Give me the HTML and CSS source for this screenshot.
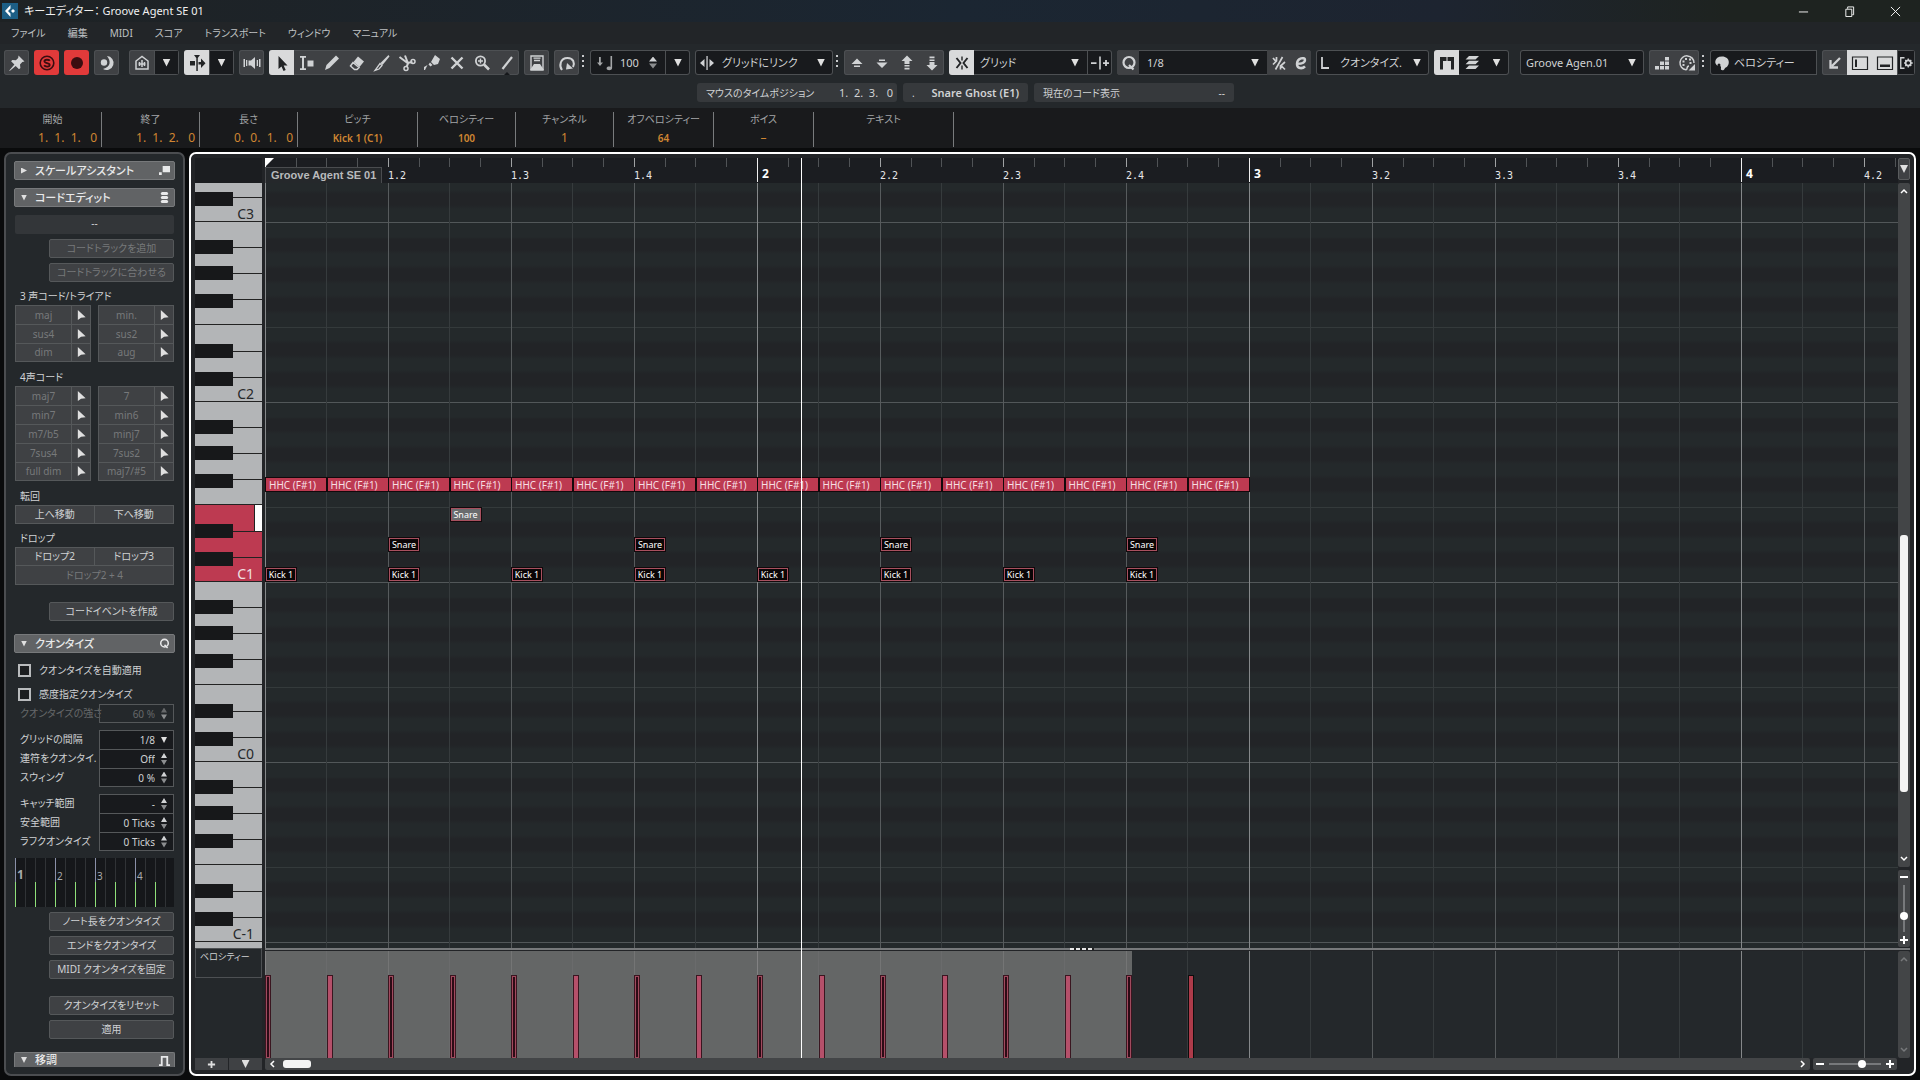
FILE: index.html
```html
<!DOCTYPE html>
<html lang="ja">
<head>
<meta charset="utf-8">
<title>キーエディター： Groove Agent SE 01</title>
<link rel="stylesheet" href="styles.css">
</head>
<body>
<svg class="sprite" aria-hidden="true">
  <symbol id="pin" viewBox="0 0 24 24"><path d="M13.500 4.500l6 6-2.200.6-2.300 2.300.4 3.600-1.400 1.200-3.300-3.300-6 5.100-.4-.4 5.100-6-3.300-3.300 1.200-1.400 3.600.4 2.300-2.300z"/></symbol>
  <symbol id="solo" viewBox="0 0 24 24"><circle cx="12" cy="12" r="6.800" fill="none" stroke="currentColor" stroke-width="1.600"/><path d="M14.800 9.800c-1-1.500-5.400-1.500-5.400.5 0 2.300 5.300 1.200 5.300 3.600 0 2.100-4.500 2.100-5.600.4" fill="none" stroke="currentColor" stroke-width="1.800"/></symbol>
  <symbol id="rec" viewBox="0 0 24 24"><circle cx="12" cy="12" r="6"/></symbol>
  <symbol id="moon" viewBox="0 0 24 24"><path d="M12 5a7 7 0 1 1-4 13c8-2 8-8 4-13z"/><circle cx="9" cy="11.500" r="3.200"/></symbol>
  <symbol id="home" viewBox="0 0 24 24"><path d="M6 18V10l6-4.500 6 4.500v8zM12 9v7M8.500 13h7M9.500 11v4M14.500 11v4" fill="none" stroke="currentColor" stroke-width="1.500"/></symbol>
  <symbol id="scroll" viewBox="0 0 24 24"><path d="M9 4h6l-3 4zM11.300 6h1.500v14h-1.500zM5 10h5v4.500H5zM13.500 11h2.500V7.500l4.500 4.700L16 17v-3.500h-2.500z"/></symbol>
  <symbol id="speaker" viewBox="0 0 24 24"><path d="M8.500 9.500h2.500L15 6v12l-4-3.500H8.500zM3.500 8H5v8H3.500zM6 9h1.300v6H6zM16.700 9H18v6h-1.300zM19 8h1.500v8H19z"/></symbol>
  <symbol id="arrow" viewBox="0 0 24 24"><path d="M8.500 5v13l3-2.500 2 4.500 2.200-1-2-4.500h3.800z"/></symbol>
  <symbol id="range" viewBox="0 0 24 24"><path d="M5 5h6v1.800H9v10.400h2V19H5v-1.800h2V6.800H5zM12.500 9.500h6v6h-6z"/></symbol>
  <symbol id="pencil" viewBox="0 0 24 24"><path d="M16 4.500l3 3L9.500 17 5 19l1.500-5z"/></symbol>
  <symbol id="eraser" viewBox="0 0 24 24"><path d="M13 5.500l6 5-4.500 5.500-6-5z"/><path d="M8 11.500l6 5-2 2H9.500l-4-3.500z" fill="none" stroke="currentColor" stroke-width="1.500"/></symbol>
  <symbol id="knife" viewBox="0 0 24 24"><path d="M18.500 4l1 1.500-7 8.500-2-2z"/><path d="M10 12.500l2 2-3 3.500-4 1.500z" fill="none" stroke="currentColor" stroke-width="1.300"/></symbol>
  <symbol id="scissors" viewBox="0 0 24 24"><path d="M4.500 6l8 6 5-1M10 4.500l3 8-1.500 3.500" fill="none" stroke="currentColor" stroke-width="2"/><circle cx="18" cy="10.500" r="2" fill="none" stroke="currentColor" stroke-width="1.500"/><circle cx="11" cy="17.500" r="2" fill="none" stroke="currentColor" stroke-width="1.500"/></symbol>
  <symbol id="glue" viewBox="0 0 24 24"><path d="M15 4l5 4-2 5-4 1-3-3zM10 11.500l2.500 2.500-2 1.500-2-2zM7.500 14L5 19H4v-3z"/></symbol>
  <symbol id="mute" viewBox="0 0 24 24"><path d="M6.500 6.500l11 11M17.500 6.500l-11 11" stroke="currentColor" stroke-width="2.400"/></symbol>
  <symbol id="mag" viewBox="0 0 24 24"><circle cx="10.500" cy="10" r="4.600" fill="none" stroke="currentColor" stroke-width="1.800"/><path d="M14 13.500l5 5" stroke="currentColor" stroke-width="2.600"/><path d="M10.500 7.500v5M8 10h5" stroke="currentColor" stroke-width="1.400"/></symbol>
  <symbol id="line" viewBox="0 0 24 24"><path d="M17 6L7.500 18" stroke="currentColor" stroke-width="2.200"/><path d="M9 24l3-3 3 3z" fill="#15171a"/></symbol>
  <symbol id="edit" viewBox="0 0 24 24"><path d="M6 5h12v14H6z" fill="none" stroke="currentColor" stroke-width="1.400"/><path d="M8.500 7.200h7M9 9.500h6" stroke="currentColor" stroke-width="1.300"/><path d="M5 19l4-6h6l4 6z"/></symbol>
  <symbol id="loop" viewBox="0 0 24 24"><path d="M7 19c-3-4-2-12 5.500-12 6 0 7.500 5 5.500 9" fill="none" stroke="currentColor" stroke-width="2"/><path d="M12 12l-1 6.500 7-1z"/></symbol>
  <symbol id="note" viewBox="0 0 24 24"><path d="M6 6h1.800v5.500H10l-3 3.500-3-3.500h2zM17.500 5h1.600v12c0 2.800-5.500 2.800-5.500.5 0-2 2.600-2.300 3.900-1.500z"/></symbol>
  <symbol id="link" viewBox="0 0 24 24"><path d="M11.400 5h1.300v14h-1.300zM9.500 8v8L5 12zM14.500 8v8l4.500-4z"/></symbol>
  <symbol id="up" viewBox="0 0 24 24"><path d="M12 7.500l5.500 5.500h-11zM9 14.500h6v1.500H9z"/></symbol>
  <symbol id="down" viewBox="0 0 24 24"><path d="M12 17l5.500-5.500h-11zM9 8.500h6V10H9z"/></symbol>
  <symbol id="up2" viewBox="0 0 24 24"><path d="M12 4.500l5.500 5.500h-3v3h-5v-3h-3zM9.500 14h5v1.600h-5zM9.500 16.800h5v1.600h-5z"/></symbol>
  <symbol id="down2" viewBox="0 0 24 24"><path d="M12 19.500l5.500-5.500h-3v-3h-5v3h-3zM9.500 8.400h5V10h-5zM9.500 5.600h5v1.600h-5z"/></symbol>
  <symbol id="snap" viewBox="0 0 24 24"><path d="M6.500 7l4 5-4 5M17.500 7l-4 5 4 5" fill="none" stroke="currentColor" stroke-width="1.900"/><path d="M11.300 5.500h1.400v4h-1.400zM11.300 14.500h1.400v4h-1.400z"/></symbol>
  <symbol id="gridtype" viewBox="0 0 24 24"><path d="M3 11.200h5.500v1.800H3zM11.200 5.500h1.600v13h-1.600zM15 11.200h6v1.800h-6zM17.100 9h1.800v6h-1.800z"/></symbol>
  <symbol id="q" viewBox="0 0 24 24"><circle cx="12" cy="11.500" r="5.500" fill="none" stroke="currentColor" stroke-width="2.200"/><path d="M12 14l4.500 4.500" stroke="currentColor" stroke-width="2.200"/></symbol>
  <symbol id="iq" viewBox="0 0 24 24"><path d="M6 7l3 3.500M6 13.500l3.500-3.500V6M15.500 6L8.500 18.500M18 11l-4 3.500 4 4M13.500 14v4.500" fill="none" stroke="currentColor" stroke-width="1.700"/></symbol>
  <symbol id="e" viewBox="0 0 24 24"><path d="M8 12.800c3.500 0 8-.8 8-3.800C16 5.500 8 7 8 13c0 5 5.500 5 8 2.300" fill="none" stroke="currentColor" stroke-width="2.500"/></symbol>
  <symbol id="ell" viewBox="0 0 24 24"><path d="M6 6v11h7" fill="none" stroke="currentColor" stroke-width="1.800"/></symbol>
  <symbol id="parts" viewBox="0 0 24 24"><path d="M5 6h6.500v4H8v8.500H5zM12.500 6H19v12.500h-3V10h-3.500z"/></symbol>
  <symbol id="layers" viewBox="0 0 24 24"><path d="M9 5h10l-3.500 3.500h-10zM9 9.800h10l-3.500 3.500h-10zM9 14.600h10l-3.500 3.500h-10z"/></symbol>
  <symbol id="steps" viewBox="0 0 24 24"><path d="M5 15h4v3.500H5zM10 15h4v3.500h-4zM15 15h4v3.500h-4zM10 10.500h4V14h-4zM15 10.500h4V14h-4zM15 6h4v3.500h-4z"/></symbol>
  <symbol id="palette" viewBox="0 0 24 24"><path d="M19 12a7 7 0 1 0-8 6.800c2 0 0-3.800 3-3.800" fill="none" stroke="currentColor" stroke-width="1.500"/><path d="M7.500 9.500h2v2h-2zM10 7h2v2h-2zM14 7.500h2v2h-2zM7.500 13h2v2h-2zM14.500 11h2v2h-2zM20 13v6.500h-6.500z"/></symbol>
  <symbol id="colour" viewBox="0 0 24 24"><path d="M12 5.500c8.500 0 8.500 9.500 3 11.500-1 3.500-5 2.500-4 0 .5-2-1-2-2.500-2-5-1-4.500-9.500 3.500-9.500z"/><circle cx="9" cy="14" r="1.500" fill="#181a1d"/></symbol>
  <symbol id="sw" viewBox="0 0 24 24"><path d="M17 7l-8 8M7.500 9v7.500H15" fill="none" stroke="currentColor" stroke-width="2.300"/></symbol>
  <symbol id="zoneL" viewBox="0 0 24 24"><path d="M4.500 6h15v12.500h-15z" fill="none" stroke="currentColor" stroke-width="1.200"/><path d="M7 8.500h2v7.500H7z"/></symbol>
  <symbol id="zoneB" viewBox="0 0 24 24"><path d="M4.500 6h15v12.500h-15z" fill="none" stroke="currentColor" stroke-width="1.200"/><path d="M7 13.500h10V16H7z"/></symbol>
  <symbol id="setup" viewBox="0 0 24 24"><path d="M10 5H5v14h5" fill="none" stroke="currentColor" stroke-width="1.800"/><circle cx="15" cy="12" r="3.500" fill="none" stroke="currentColor" stroke-width="2.200"/><path d="M15 6v3M15 15v3M9.500 12h2M18.500 12h2.500M11 8l2 2M19 8l-2 2M11 16l2-2M19 16l-2-2" stroke="currentColor" stroke-width="1.800"/></symbol>
  <symbol id="ptr" viewBox="0 0 12 12"><path d="M2 0v11l3.500-2.500L10.500 8z"/></symbol>
</svg>

<header class="titlebar">
  <svg class="logo" viewBox="0 0 16 16"><path fill="#1d5f86" d="M0 0h16v16H0z"/><path d="M8.500 2L3 8l5.500 6V10.500L6 8l2.500-2.500z" fill="#fff"/><path d="M11 6l2 2-2 2-2-2z" fill="#fff"/></svg>
  <h1>キーエディター： Groove Agent SE 01</h1>
  <div class="winbtns">
    <button aria-label="最小化"><svg viewBox="0 0 12 12"><path d="M1 6.500h10"/></svg></button>
    <button aria-label="元に戻す"><svg viewBox="0 0 12 12"><path d="M2 3.500h6.500v8H2zM4 3V1h6.500v8.500H9"/></svg></button>
    <button aria-label="閉じる"><svg viewBox="0 0 12 12"><path d="M1 1l10 10M11 1L1 11"/></svg></button>
  </div>
</header>

<nav class="menubar">
  <a href="#">ファイル</a><a href="#">編集</a><a href="#">MIDI</a><a href="#">スコア</a><a href="#">トランスポート</a><a href="#">ウィンドウ</a><a href="#">マニュアル</a>
</nav>

<div class="toolbar">
  <div class="group"><button class="tb" aria-label="固定"><svg><use href="#pin"/></svg></button></div>
  <div class="group red"><button class="tb" aria-label="ソロ"><svg><use href="#solo"/></svg></button></div>
  <div class="group red"><button class="tb" aria-label="録音"><svg><use href="#rec"/></svg></button></div>
  <div class="group moon"><button class="tb" aria-label="レトロスペクティブ録音"><svg><use href="#moon"/></svg></button></div>
  <div class="group"><button class="tb" aria-label="可視性"><svg><use href="#home"/></svg></button><button class="tb dark" aria-label="可視性メニュー"><i class="tri"></i></button></div>
  <div class="group"><button class="tb lit" aria-label="オートスクロール"><svg><use href="#scroll"/></svg></button><button class="tb dark" aria-label="スクロールメニュー"><i class="tri"></i></button></div>
  <div class="group"><button class="tb" aria-label="試聴"><svg><use href="#speaker"/></svg></button></div>
  <div class="group">
    <button class="tb lit" aria-label="選択"><svg><use href="#arrow"/></svg></button><button class="tb" aria-label="範囲"><svg><use href="#range"/></svg></button><button class="tb" aria-label="鉛筆"><svg><use href="#pencil"/></svg></button><button class="tb" aria-label="消しゴム"><svg><use href="#eraser"/></svg></button><button class="tb" aria-label="トリム"><svg><use href="#knife"/></svg></button><button class="tb" aria-label="はさみ"><svg><use href="#scissors"/></svg></button><button class="tb" aria-label="のり"><svg><use href="#glue"/></svg></button><button class="tb" aria-label="ミュート"><svg><use href="#mute"/></svg></button><button class="tb" aria-label="ズーム"><svg><use href="#mag"/></svg></button><button class="tb" aria-label="ライン"><svg><use href="#line"/></svg></button>
  </div>
  <div class="group"><button class="tb" aria-label="コントローラー自動選択"><svg><use href="#edit"/></svg></button></div>
  <div class="group"><button class="tb" aria-label="ループ"><svg><use href="#loop"/></svg></button></div>
  <i class="dots"></i>
  <div class="group dark w-vel"><svg class="ico dim"><use href="#note"/></svg><input class="num" value="100" aria-label="挿入ベロシティー"><i class="spin"></i><button class="tb split" aria-label="ベロシティーメニュー"><i class="tri"></i></button></div>
  <label class="group dark w-link"><svg class="ico"><use href="#link"/></svg><select aria-label="クオンタイズリンク"><option>グリッドにリンク</option></select><i class="tri"></i></label>
  <i class="dots"></i>
  <div class="group"><button class="tb" aria-label="上へ移動"><svg><use href="#up"/></svg></button><button class="tb" aria-label="下へ移動"><svg><use href="#down"/></svg></button><button class="tb" aria-label="1 オクターブ上"><svg><use href="#up2"/></svg></button><button class="tb" aria-label="1 オクターブ下"><svg><use href="#down2"/></svg></button></div>
  <div class="group dark w-snap"><button class="tb lit" aria-label="スナップ"><svg><use href="#snap"/></svg></button><select aria-label="スナップタイプ"><option>グリッド</option></select><i class="tri"></i><button class="tb split" aria-label="グリッドタイプ"><svg><use href="#gridtype"/></svg></button></div>
  <div class="group dark w-quant"><button class="tb grey" aria-label="クオンタイズ"><svg><use href="#q"/></svg></button><select aria-label="クオンタイズ値"><option>1/8</option></select><i class="tri"></i><button class="tb grey" aria-label="iQ"><svg><use href="#iq"/></svg></button><button class="tb grey" aria-label="クオンタイズパネル"><svg><use href="#e"/></svg></button></div>
  <label class="group dark w-len"><svg class="ico"><use href="#ell"/></svg><select aria-label="長さクオンタイズ"><option>クオンタイズ.</option></select><i class="tri"></i></label>
  <div class="group dark"><button class="tb lit" aria-label="パート境界"><svg><use href="#parts"/></svg></button><button class="tb" aria-label="パート編集"><svg><use href="#layers"/></svg></button><button class="tb" aria-label="パートメニュー"><i class="tri"></i></button></div>
  <label class="group dark w-part"><select aria-label="編集パート"><option>Groove Agen.01</option></select><i class="tri"></i></label>
  <div class="group"><button class="tb" aria-label="ステップ入力"><svg><use href="#steps"/></svg></button><button class="tb" aria-label="MIDI 入力"><svg><use href="#palette"/></svg></button></div>
  <i class="dots"></i>
  <label class="group dark open w-colour"><svg class="ico"><use href="#colour"/></svg><select aria-label="イベントカラー"><option>ベロシティー</option></select></label>
  <div class="group"><button class="tb" aria-label="下ゾーンで開く"><svg><use href="#sw"/></svg></button><button class="tb lit" aria-label="左ゾーン"><svg><use href="#zoneL"/></svg></button><button class="tb lit" aria-label="下ゾーン"><svg><use href="#zoneB"/></svg></button><button class="tb dark narrow" aria-label="設定"><svg><use href="#setup"/></svg></button></div>
</div>

<div class="status">
  <div class="pill wide"><span>マウスのタイムポジション</span><span class="pos">1.  2.  3.   0</span></div>
  <div class="pill mid"><span>.</span><b>Snare Ghost (E1)</b></div>
  <div class="pill wide"><span>現在のコード表示</span><span>--</span></div>
</div>

<dl class="infoline">
  <div class="time"><dt>開始</dt><dd>1.  1.  1.   0</dd></div>
  <div class="time"><dt>終了</dt><dd>1.  1.  2.   0</dd></div>
  <div class="time"><dt>長さ</dt><dd>0.  0.  1.   0</dd></div>
  <div class="pitch"><dt>ピッチ</dt><dd class="small">Kick 1 (C1)</dd></div>
  <div><dt>ベロシティー</dt><dd class="small">100</dd></div>
  <div><dt>チャンネル</dt><dd>1</dd></div>
  <div class="off-vel"><dt>オフベロシティー</dt><dd class="small">64</dd></div>
  <div class="voice"><dt>ボイス</dt><dd>–</dd></div>
  <div class="text"><dt>テキスト</dt><dd></dd></div>
</dl>

<main class="work">
  <aside class="inspector">
    <button class="head"><i class="tri side"></i><span>スケールアシスタント</span><svg viewBox="0 0 12 12"><path d="M4 1h8v7H4zM0 8h3v3H0z"/></svg></button>
    <button class="head"><i class="tri"></i><span>コードエディット</span><svg viewBox="0 0 12 12"><rect x="2" y="0" width="8" height="3.400" rx="1.700"/><rect x="2" y="4.300" width="8" height="3.400" rx="1.700"/><rect x="2" y="8.600" width="8" height="3.400" rx="1.700"/></svg></button>
    <div class="readout">--</div>
    <button class="btn off">コードトラックを追加</button>
    <button class="btn off">コードトラックに合わせる</button>
    <h3>3 声コード/トライアド</h3>
    <div class="chords">
      <div><button>maj</button><button aria-label="maj"><svg><use href="#ptr"/></svg></button></div><div><button>min.</button><button aria-label="min."><svg><use href="#ptr"/></svg></button></div>
      <div><button>sus4</button><button aria-label="sus4"><svg><use href="#ptr"/></svg></button></div><div><button>sus2</button><button aria-label="sus2"><svg><use href="#ptr"/></svg></button></div>
      <div><button>dim</button><button aria-label="dim"><svg><use href="#ptr"/></svg></button></div><div><button>aug</button><button aria-label="aug"><svg><use href="#ptr"/></svg></button></div>
    </div>
    <h3>4声コード</h3>
    <div class="chords">
      <div><button>maj7</button><button aria-label="maj7"><svg><use href="#ptr"/></svg></button></div><div><button>7</button><button aria-label="7"><svg><use href="#ptr"/></svg></button></div>
      <div><button>min7</button><button aria-label="min7"><svg><use href="#ptr"/></svg></button></div><div><button>min6</button><button aria-label="min6"><svg><use href="#ptr"/></svg></button></div>
      <div><button>m7/b5</button><button aria-label="m7/b5"><svg><use href="#ptr"/></svg></button></div><div><button>minj7</button><button aria-label="minj7"><svg><use href="#ptr"/></svg></button></div>
      <div><button>7sus4</button><button aria-label="7sus4"><svg><use href="#ptr"/></svg></button></div><div><button>7sus2</button><button aria-label="7sus2"><svg><use href="#ptr"/></svg></button></div>
      <div><button>full dim</button><button aria-label="full dim"><svg><use href="#ptr"/></svg></button></div><div><button>maj7/#5</button><button aria-label="maj7/#5"><svg><use href="#ptr"/></svg></button></div>
    </div>
    <h3>転回</h3>
    <div class="pair"><button>上へ移動</button><button>下へ移動</button></div>
    <h3>ドロップ</h3>
    <div class="pair"><button>ドロップ2</button><button>ドロップ3</button><button class="full off">ドロップ2 + 4</button></div>
    <button class="btn apart">コードイベントを作成</button>
    <button class="head gap"><i class="tri"></i><span>クオンタイズ</span><svg viewBox="4 4 16 16"><use href="#q" width="24" height="24"/></svg></button>
    <label class="check"><input type="checkbox">クオンタイズを自動適用</label>
    <label class="check"><input type="checkbox">感度指定クオンタイズ</label>
    <div class="fields off"><label for="f1">クオンタイズの強さ</label><div><input id="f1" value="60 %" disabled><i class="spin"></i></div></div>
    <div class="fields">
      <label for="f2">グリッドの間隔</label><div><select id="f2"><option>1/8</option></select><i class="tri"></i></div>
      <label for="f3">連符をクオンタイ.</label><div><input id="f3" value="Off"><i class="spin"></i></div>
      <label for="f4">スウィング</label><div><input id="f4" value="0 %"><i class="spin"></i></div>
    </div>
    <div class="fields">
      <label for="f5">キャッチ範囲</label><div><input id="f5" value="-"><i class="spin"></i></div>
      <label for="f6">安全範囲</label><div><input id="f6" value="0 Ticks"><i class="spin"></i></div>
      <label for="f7">ラフクオンタイズ</label><div><input id="f7" value="0 Ticks"><i class="spin"></i></div>
    </div>
    <div class="qgrid"><b>1</b><span>2</span><span>3</span><span>4</span></div>
    <button class="btn">ノート長をクオンタイズ</button>
    <button class="btn">エンドをクオンタイズ</button>
    <button class="btn">MIDI クオンタイズを固定</button>
    <button class="btn apart">クオンタイズをリセット</button>
    <button class="btn">適用</button>
    <button class="head gap last"><i class="tri"></i><span>移調</span><svg viewBox="0 0 12 12"><path d="M0 11h3V2h6v9h3" fill="none" stroke="currentColor" stroke-width="2"/></svg></button>
  </aside>

  <section class="editor">
    <div class="keys">
      <div class="corner"></div>
      <div class="piano">
        <div class="octave first"><span>C3</span></div>
        <div class="octave"><span>C2</span></div>
        <div class="octave held"><span>C1</span></div>
        <div class="octave"><span>C0</span></div>
        <div class="octave"><span>C-1</span></div>
        <div class="octave last"></div>
      </div>
      <div class="lanehead"><button>ベロシティー</button></div>
      <div class="laneadd"><button aria-label="レーンを追加"><svg viewBox="0 0 10 10"><path d="M1 5h8M5 1v8"/></svg></button><button aria-label="レーンメニュー"><i class="tri"></i></button></div>
    </div>

    <div class="canvas">
      <div class="ruler">
        <div class="part">Groove Agent SE 01</div>
        <svg class="locator" viewBox="0 0 9 9"><path d="M0 0h9L0 9z"/></svg>
        <span style="--at:1">1.2</span><span style="--at:2">1.3</span><span style="--at:3">1.4</span><b style="--at:4">2</b>
        <span style="--at:5">2.2</span><span style="--at:6">2.3</span><span style="--at:7">2.4</span><b style="--at:8">3</b>
        <span style="--at:9">3.2</span><span style="--at:10">3.3</span><span style="--at:11">3.4</span><b style="--at:12">4</b><span style="--at:13">4.2</span>
      </div>
      <div class="notes">
        <div class="note hat" style="--at:0;--row:17">HHC (F#1)</div><div class="note hat" style="--at:.5;--row:17">HHC (F#1)</div><div class="note hat" style="--at:1;--row:17">HHC (F#1)</div><div class="note hat" style="--at:1.5;--row:17">HHC (F#1)</div>
        <div class="note hat" style="--at:2;--row:17">HHC (F#1)</div><div class="note hat" style="--at:2.5;--row:17">HHC (F#1)</div><div class="note hat" style="--at:3;--row:17">HHC (F#1)</div><div class="note hat" style="--at:3.5;--row:17">HHC (F#1)</div>
        <div class="note hat" style="--at:4;--row:17">HHC (F#1)</div><div class="note hat" style="--at:4.5;--row:17">HHC (F#1)</div><div class="note hat" style="--at:5;--row:17">HHC (F#1)</div><div class="note hat" style="--at:5.5;--row:17">HHC (F#1)</div>
        <div class="note hat" style="--at:6;--row:17">HHC (F#1)</div><div class="note hat" style="--at:6.5;--row:17">HHC (F#1)</div><div class="note hat" style="--at:7;--row:17">HHC (F#1)</div><div class="note hat" style="--at:7.5;--row:17">HHC (F#1)</div>
        <div class="note ghost" style="--at:1.5;--row:19">Snare</div>
        <div class="note" style="--at:1;--row:21">Snare</div><div class="note" style="--at:3;--row:21">Snare</div><div class="note" style="--at:5;--row:21">Snare</div><div class="note" style="--at:7;--row:21">Snare</div>
        <div class="note" style="--at:0;--row:23">Kick 1</div><div class="note" style="--at:1;--row:23">Kick 1</div><div class="note" style="--at:2;--row:23">Kick 1</div><div class="note" style="--at:3;--row:23">Kick 1</div>
        <div class="note" style="--at:4;--row:23">Kick 1</div><div class="note" style="--at:5;--row:23">Kick 1</div><div class="note" style="--at:6;--row:23">Kick 1</div><div class="note" style="--at:7;--row:23">Kick 1</div>
      </div>
      <div class="splitter"><i></i></div>
      <div class="velocity">
        <div class="selection"></div>
        <i class="bar sel" style="--at:0"></i><i class="bar" style="--at:.5"></i><i class="bar sel" style="--at:1"></i><i class="bar sel" style="--at:1.5"></i>
        <i class="bar sel" style="--at:2"></i><i class="bar" style="--at:2.5"></i><i class="bar sel" style="--at:3"></i><i class="bar" style="--at:3.5"></i>
        <i class="bar sel" style="--at:4"></i><i class="bar" style="--at:4.5"></i><i class="bar sel" style="--at:5"></i><i class="bar" style="--at:5.5"></i>
        <i class="bar sel" style="--at:6"></i><i class="bar" style="--at:6.5"></i><i class="bar sel" style="--at:7"></i><i class="bar plain" style="--at:7.5"></i>
      </div>
      <div class="hbar">
        <div class="hscroll"><svg viewBox="0 0 8 8"><path d="M5 1L2 4l3 3"/></svg><i class="thumb"></i><svg class="end" viewBox="0 0 8 8"><path d="M3 1l3 3-3 3"/></svg></div>
        <div class="hzoom"><svg viewBox="0 0 8 8"><path d="M0 4h8"/></svg><i class="track"><i class="knob"></i></i><svg viewBox="0 0 8 8"><path d="M0 4h8M4 0v8"/></svg></div>
      </div>
      <i class="playhead"></i>
    </div>

    <div class="vbar">
      <button class="vmenu" aria-label="ルーラー表示形式"><i class="tri"></i></button>
      <div class="vscroll"><svg viewBox="0 0 8 8"><path d="M1 6l3-3 3 3"/></svg><i class="thumb"></i><svg class="end" viewBox="0 0 8 8"><path d="M1 2l3 3 3-3"/></svg></div>
      <div class="vzoom"><svg viewBox="0 0 8 8"><path d="M0 4h8"/></svg><i class="track"><i class="knob"></i></i><svg viewBox="0 0 8 8"><path d="M0 4h8M4 0v8"/></svg></div>
      <div class="vsplit"></div>
      <div class="vlane"><svg viewBox="0 0 8 8"><path d="M1 6l3-3 3 3"/></svg><svg viewBox="0 0 8 8"><path d="M1 2l3 3 3-3"/></svg></div>
    </div>
  </section>
</main>
</body>
</html>
```
FILE: styles.css
```css
:root {
  --edge: #4d5053;
  --field: #181a1d;
  --btn: #3f4144;
  --panel: #24282b;
  --ink: #d0d2d4;
  --red: #bd3a51;
  --beat: 123px;
  --row-h: 15px;
}

* { box-sizing: border-box; }

body {
  margin: 0;
  height: 100vh;
  display: flex;
  flex-direction: column;
  overflow: hidden;
  background: #0a0b0c;
  color: var(--ink);
  font: 12px/16px "Noto Sans", "Noto Sans CJK JP", sans-serif;
  font-feature-settings: "palt";
}

button, input, select {
  margin: 0;
  padding: 0;
  border: 0;
  border-radius: 0;
  background: none;
  color: inherit;
  font: inherit;
  font-feature-settings: inherit;
  appearance: none;
  outline: none;
  min-width: 0;
}

svg { fill: currentColor; display: block; flex: none; }
.sprite { position: absolute; width: 0; height: 0; }
a { color: inherit; text-decoration: none; }

.tri {
  flex: none;
  width: 8px;
  height: 8px;
  background: #e0e0e0;
  clip-path: polygon(0 0, 100% 0, 50% 100%);
}
.tri.side { clip-path: polygon(0 0, 100% 50%, 0 100%); }

.spin {
  flex: none;
  width: 6px;
  height: 12px;
  background: linear-gradient(currentColor 50%, #8b8d8f 50%);
  clip-path: polygon(50% 0, 100% 5px, 0 5px, 0 7px, 100% 7px, 50% 100%, 0 7px, 0 5px);
}

/* title and menu */
.titlebar {
  flex: none;
  height: 22px;
  display: flex;
  align-items: center;
  gap: 6px;
  padding-left: 2px;
  background: linear-gradient(90deg, #1e2224, #1b2632 50%, #1d2430 75%, #1e2320 90%);
}
.logo { width: 16px; height: 16px; }
.titlebar h1 { margin: 0; font-size: 11px; font-weight: 400; color: #f0f0f0; flex: 1; }
.winbtns { display: flex; }
.winbtns button { width: 46px; height: 22px; display: grid; place-items: center; color: #fff; }
.winbtns:last-child { padding-right: 2px; }
.winbtns svg { width: 11px; height: 11px; fill: none; stroke: currentColor; }
.menubar {
  flex: none;
  height: 22px;
  display: flex;
  align-items: center;
  gap: 22px;
  padding-left: 11px;
  background: #222528;
  color: #bfc1c3;
  font-size: 10px;
}

/* toolbar */
.toolbar {
  flex: none;
  display: flex;
  gap: 5px;
  padding: 6px 5px 8px 4px;
  background: var(--panel);
}
.group {
  flex: none;
  height: 25px;
  display: flex;
  align-items: center;
  overflow: hidden;
  border-radius: 3px;
  background: var(--btn);
  box-shadow: inset 0 0 0 1px var(--edge);
}
.group.dark { background: var(--field); }
.group.red { background: #e23a3a; box-shadow: none; color: #3a0d10; }
.group.moon { margin-right: 5px; }
.tb { width: 25px; height: 25px; display: grid; place-items: center; flex: none; }
.tb svg, .ico { width: 24px; height: 24px; }
.tb.dark { background: var(--field); box-shadow: inset 0 0 0 1px var(--edge); }
.tb.lit { background: #d9dadb; color: #222426; }
.tb.grey { background: var(--btn); width: 22px; }
.tb.split { border-left: 1px solid var(--edge); }
.tb.narrow { width: 18px; }
.tb.narrow svg { width: 18px; height: 18px; }
.ico.dim { color: #a4a6a8; margin: 0 3px; }
.dots {
  width: 2px;
  margin: 5px 1px 5px -2px;
  flex: none;
  background: repeating-linear-gradient(#c8cacc 0 2px, transparent 2px 5px);
}
.group select { flex: 1; height: 25px; padding: 0 3px; font-size: 11px; }
.group > .tri { margin-right: 8px; }
.num { width: 28px; font-size: 11px; }
.w-vel { width: 100px; }
.w-vel .spin { margin: 0 8px 0 auto; width: 8px; }
.w-link { width: 138px; }
.w-snap { width: 163px; }
.w-snap select { padding-left: 6px; }
.w-quant { width: 194px; }
.w-quant select { padding-left: 8px; }
.w-len { width: 113px; }
.w-len select { padding: 0; }
.w-part { width: 124px; margin-left: 6px; }
.w-part select { padding-left: 6px; }
.w-colour { flex: 1 1 60px; }
.w-colour select { padding: 0; }
.group.open { border-radius: 3px 0 0 3px; }

/* status */
.status {
  flex: none;
  display: flex;
  justify-content: center;
  gap: 6px;
  padding: 0 0 6px 11px;
  background: var(--panel);
  font-size: 10px;
}
.pill { height: 19px; display: flex; align-items: center; justify-content: space-between; padding: 0 9px; border-radius: 3px; background: #36393c; }
.pill.wide { width: 200px; }
.pill.mid { width: 125px; }
.pill b { font-size: 11px; font-weight: 600; }
.pos { white-space: pre; font-size: 11px; margin-right: -5px; }

/* info line */
.infoline { flex: none; height: 40px; margin: 0 0 4px; padding: 4px 0 1px 4px; display: flex; background: #191a1c; }
.infoline > div { width: 98px; border-right: 1px solid #797b7d; text-align: center; }
.infoline > .pitch { width: 120px; }
.infoline > .off-vel, .infoline > .voice { width: 100px; }
.infoline > .text { width: 140px; }
.infoline dt { font-size: 10px; line-height: 15px; color: #a3a5a7; }
.infoline dd { margin: 3px 0 0; font-size: 12px; line-height: 16px; color: #d08632; white-space: pre; }
.infoline dd.small { font-size: 10px; font-weight: 600; }
.infoline .time dd { text-align: right; padding-right: 4px; }

/* workspace */
.work { flex: 1; min-height: 0; display: flex; gap: 4px; padding: 0 4px 4px; }

.inspector {
  flex: none;
  width: 181px;
  display: flex;
  flex-direction: column;
  padding: 7px 8px;
  border: 2px solid #4b4d50;
  border-radius: 7px;
  background: var(--panel);
  overflow: hidden;
  font-size: 10px;
}
.inspector > * { flex: none; }
.head {
  height: 19px;
  display: flex;
  align-items: center;
  gap: 8px;
  margin-bottom: 8px;
  padding: 0 4px 0 6px;
  border: 1px solid #77797b;
  border-radius: 2px;
  background: #616365;
  color: #e8e9ea;
  font-size: 11px;
  font-weight: 500;
  text-align: left;
}
.head .tri { width: 6px; height: 6px; }
.head span { flex: 1; }
.head svg { width: 11px; height: 11px; }
.head.gap { margin-top: 8px; margin-bottom: 5px; }
.inspector > .head.last { flex: 0 1 19px; min-height: 0; margin-bottom: 0; border-bottom: 0; border-radius: 2px 2px 0 0; line-height: 14px; }
.readout { height: 19px; margin: 0 1px 5px; text-align: center; border-radius: 2px; background: #333639; }
.btn, .chords button, .pair button { background: var(--btn); border: 1px solid #55585a; line-height: 15px; }
.btn { height: 19px; margin: 0 1px 5px 35px; border-radius: 2px; }
.btn.apart { margin-top: 12px; }
.off, .chords button:first-child { color: #77797b; }
.inspector h3 { margin: 0; padding: 1px 6px 1px; height: 18px; font-size: 10px; font-weight: 400; }
.chords { display: grid; grid-template-columns: 1fr 1fr; column-gap: 7px; margin: 0 1px 6px; }
.chords > div { display: grid; grid-template-columns: 1fr 19px; height: 19px; }
.chords > div button + button { border-left: 0; display: grid; place-items: center; color: #e0e0e0; }
.chords > div button { border-bottom: 0; }
.chords > div:nth-last-child(-n+2) button { border-bottom: 1px solid #55585a; }
.chords svg { width: 11px; height: 11px; }
.pair { display: grid; grid-template-columns: 1fr 1fr; margin: 0 1px 5px; }
.pair button { height: 19px; }
.pair button:nth-child(2) { border-left: 0; }
.pair .full { grid-column: 1 / -1; border-top: 0; }
.check { height: 24px; display: flex; align-items: center; gap: 8px; padding-left: 4px; }
.check + .fields { margin-top: -2px; }
.check input { width: 13px; height: 13px; border: 2px solid #b9bbbd; background: #1c1e20; }
.fields {
  display: grid;
  grid-template-columns: minmax(0, 1fr) 75px;
  margin: 0 1px 7px 6px;
  align-items: center;
  white-space: nowrap;
}
.fields > label { line-height: 19px; }
.fields > div { height: 19px; display: flex; align-items: center; padding-right: 6px; gap: 6px; background: var(--field); border: 1px solid #55585a; border-bottom: 0; }
.fields > div:last-child { border-bottom: 1px solid #55585a; }
.fields input, .fields select { width: 100%; text-align: right; text-align-last: right; flex: 1; }
.fields .tri { width: 6px; height: 6px; }
.fields.off { color: #66686a; }
.fields.off > div { background: none; }
.qgrid {
  height: 49px;
  margin: 0 1px 5px;
  display: grid;
  grid-template-columns: repeat(4, 40px);
  padding-top: 8px;
  overflow: hidden;
  color: #a8abad;
  font-size: 10px;
  line-height: 20px;
  background:
    repeating-linear-gradient(90deg, #8fe07a 0 1px, transparent 1px 20px) 0 24px / 100% 25px no-repeat,
    repeating-linear-gradient(90deg, #8a90a8 0 1px, transparent 1px 40px) 0 0 / 100% 24px no-repeat,
    repeating-linear-gradient(90deg, #303336 0 1px, transparent 1px 10px),
    #15171a;
}
.qgrid > * { padding-left: 2px; }
.qgrid b { font-size: 12px; line-height: 17px; }

/* editor */
.editor {
  flex: 1;
  min-width: 0;
  display: grid;
  grid-template-columns: 67px minmax(0, 1fr) 12px;
  padding: 4px;
  border: 2px solid #fff;
  border-radius: 7px;
  background: #222427;
}
.keys, .vbar { display: flex; flex-direction: column; min-height: 0; }
.corner { flex: none; height: 25px; background: #1b1d20; }
.piano { flex: 1; min-height: 0; overflow: hidden; display: flex; flex-direction: column; }
.octave {
  --key: #b3b5b7;
  --low: #b3b5b7;
  flex: none;
  height: 180px;
  display: flex;
  align-items: flex-end;
  justify-content: flex-end;
  padding: 0 8px 0 0;
  color: #26282a;
  font-size: 14px;
  line-height: 16px;
  background:
    linear-gradient(transparent 18px, #17181a 18px 32px, transparent 32px 44px, #17181a 44px 58px, transparent 58px 72px, #17181a 72px 86px, transparent 86px 122px, #17181a 122px 136px, transparent 136px 150px, #17181a 150px 164px, transparent 164px) 0 100% / 38px 180px no-repeat,
    linear-gradient(var(--key) 25px, #222 25px 26px, var(--key) 26px 51px, #222 51px 52px, var(--key) 52px 77px, #222 77px 78px, var(--key) 78px 102px, #222 102px 103px, var(--low) 103px 129px, #222 129px 130px, var(--low) 130px 155px, #222 155px 156px, var(--low) 156px 179px, #222 179px) 0 100% / 100% 180px no-repeat;
}
.octave.first { height: 39px; }
.octave.last { height: 8px; background: var(--key); }
.octave.held { --low: #bd3a51; color: #f0e0e2; position: relative; }
.octave.held::after { content: ""; position: absolute; right: 0; top: 103px; width: 7px; height: 26px; background: #fff; border-left: 1px solid #222; }
.lanehead { flex: none; height: 110px; background: var(--panel); }
.lanehead button { width: 100%; height: 30px; padding: 2px 4px; border: 1px solid #4d5053; font-size: 9px; line-height: 12px; text-align: left; display: flex; }
.laneadd { flex: none; height: 12px; display: grid; grid-template-columns: 1fr 1fr; gap: 1px; }
.laneadd button { background: var(--btn); display: grid; place-items: center; }
.laneadd svg { width: 9px; height: 9px; stroke: #e0e0e0; stroke-width: 2; }

.canvas { position: relative; margin-left: 3px; display: flex; flex-direction: column; min-height: 0; overflow: hidden; }
.ruler {
  flex: none;
  height: 25px;
  position: relative;
  background:
    repeating-linear-gradient(90deg, #f0f0f0 0 1px, transparent 1px 492px) 0 0 / 100% 24px no-repeat,
    repeating-linear-gradient(90deg, #a0a2a4 0 1px, transparent 1px 123px) 0 0 / 100% 9px no-repeat,
    repeating-linear-gradient(90deg, #505356 0 1px, transparent 1px 31px, #505356 31px 32px, transparent 32px 61px, #505356 61px 62px, transparent 62px 92px, #505356 92px 93px, transparent 93px 123px) 0 0 / 100% 9px no-repeat,
    #1b1d21;
}
.ruler > span, .ruler > b { position: absolute; left: calc(var(--at) * var(--beat)); bottom: 0; font: 10px/14px "DejaVu Sans Mono", monospace; color: #e6e7e8; }
.ruler > b { font: bold 12px/18px "Noto Sans", sans-serif; padding-left: 5px; color: #fff; }
.part { width: 117px; height: 16px; margin-top: 9px; float: left; padding-left: 5px; border: 1px solid #4a4c4f; border-bottom: 0; background: #25282b; color: #b8babc; font: bold 11px/15px "Liberation Sans", sans-serif; white-space: nowrap; }
.locator { position: absolute; left: 0; top: 0; width: 9px; height: 9px; color: #fff; }
.notes, .velocity { position: relative; overflow: hidden; }
.notes {
  flex: 1;
  min-height: 0;
  background:
    repeating-linear-gradient(90deg, #85888a 0 1px, transparent 1px 492px),
    repeating-linear-gradient(90deg, #575b5d 0 1px, transparent 1px 123px),
    repeating-linear-gradient(90deg, transparent 0 61px, #363b3d 61px 62px, transparent 62px 123px),
    linear-gradient(#525759 1px, transparent 1px 105px, #343a3b 105px 106px, transparent 106px) 0 39px / 100% 180px,
    linear-gradient(#24292b 15px, #222427 17px 28px, #24292b 32px 43px, #222427 47px 58px, #24292b 62px 73px, #222427 77px 88px, #24292b 92px 118px, #222427 122px 133px, #24292b 137px 148px, #222427 152px 163px, #24292b 167px) 0 39px / 100% 180px;
}
.note {
  position: absolute;
  left: calc(var(--at) * var(--beat));
  top: calc(39px + var(--row) * var(--row-h));
  width: 32px;
  height: 15px;
  border: 1px solid #12090b;
  background: #0a0506;
  box-shadow: inset 0 0 0 1px #a8505f;
  color: #fff;
  font-size: 9px;
  line-height: 14px;
  text-align: center;
  white-space: nowrap;
}
.note.hat { width: 62px; padding-left: 3px; background: var(--red); box-shadow: none; color: #f6dfe3; font-size: 10px; text-align: left; }
.note.ghost { background: #6a6c6e; }
.splitter { flex: none; height: 3px; border-bottom: 1px solid #222427; background: #77797b; display: flex; justify-content: center; }
.splitter i { width: 24px; height: 2px; background: repeating-linear-gradient(90deg, #e8e8e8 0 4px, #222 4px 6px); }
.velocity {
  flex: none;
  height: 107px;
  background:
    repeating-linear-gradient(90deg, #85888a 0 1px, transparent 1px 492px),
    repeating-linear-gradient(90deg, #575b5d 0 1px, transparent 1px 123px),
    repeating-linear-gradient(90deg, transparent 0 61px, #363b3d 61px 62px, transparent 62px 123px),
    var(--panel);
}
.selection { width: 867px; height: 100%; background: rgba(128, 128, 128, .7); }
.bar { position: absolute; left: calc(var(--at) * var(--beat)); bottom: 0; width: 6px; height: 83px; background: #b5506a; border: 1px solid #3a1620; border-bottom: 0; }
.bar.sel { background: #2c0c16; box-shadow: inset 0 0 0 1px #a04a5e; }
.bar.plain { background: #ad3b4a; border-color: #0c0c0c; }
.playhead { position: absolute; left: 536px; top: 0; bottom: 12px; width: 1px; background: #fff; }

.hbar { flex: none; height: 12px; display: flex; gap: 3px; }
.hscroll, .hzoom, .vscroll, .vzoom, .vlane { background: #434547; border-radius: 2px; display: flex; align-items: center; }
.hbar svg, .vbar svg { width: 8px; height: 8px; fill: none; stroke: #fff; stroke-width: 1.500; }
.hscroll { flex: 1; padding: 0 4px; }
.hscroll .thumb { margin-left: 6px; width: 28px; height: 8px; border-radius: 3px; background: #f4f4f4; }
.hscroll .end { margin-left: auto; }
.hzoom { width: 84px; margin-right: 1px; padding: 0 3px; gap: 5px; }
.hbar .hzoom svg, .vbar .vzoom svg { stroke-width: 2; }
.track { flex: 1; display: flex; align-items: center; background: #77797b; }
.hzoom .track { height: 2px; padding-left: 29px; }
.knob { flex: none; width: 8px; height: 8px; border-radius: 50%; background: #fff; }

.vmenu { flex: none; height: 22px; margin-bottom: 3px; border: 1px solid #5a5c5e; border-radius: 2px; background: var(--btn); display: grid; place-items: center; }
.vscroll, .vzoom, .vlane { flex-direction: column; padding: 4px 0; }
.vscroll { flex: 1; min-height: 0; }
.vscroll .thumb { width: 8px; height: 38%; margin-top: 340px; border-radius: 3px; background: #f4f4f4; }
.vscroll .end { margin-top: auto; }
.vzoom { flex: none; height: 77px; margin: 3px 0 1px; gap: 4px; padding: 3px 0; }
.vzoom .track { width: 2px; justify-content: center; align-items: flex-end; padding-bottom: 12px; }
.vsplit { flex: none; height: 3px; border-bottom: 1px solid #222427; background: #77797b; }
.vlane { flex: none; height: 107px; margin-bottom: 12px; justify-content: space-between; }
.vbar .vlane svg { stroke: #77797b; }
```
